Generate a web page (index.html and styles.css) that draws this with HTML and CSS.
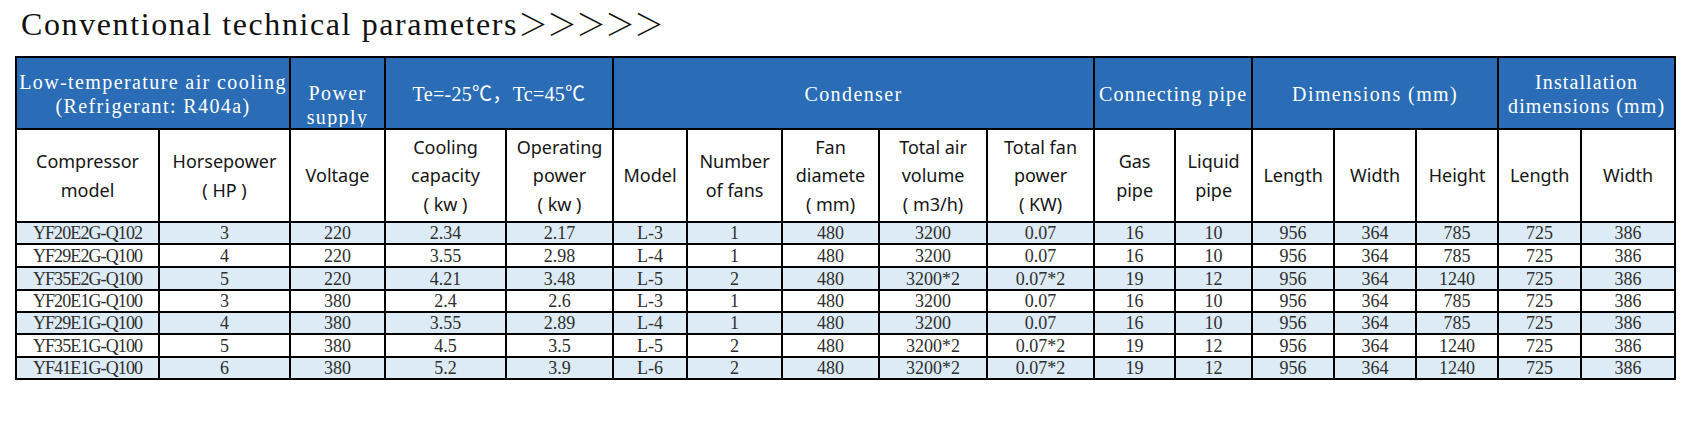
FILE: index.html
```html
<!DOCTYPE html>
<html lang="en">
<head>
<meta charset="utf-8">
<title>Conventional technical parameters</title>
<link rel="stylesheet" href="styles.css">
</head>
<body>
<div class="page">
  <h1 class="title">Conventional technical parameters<span class="arrows">＞＞＞＞＞</span></h1>
  <table class="spec">
    <colgroup>
      <col class="c1"><col class="c2"><col class="c3"><col class="c4"><col class="c5"><col class="c6"><col class="c7"><col class="c8"><col class="c9"><col class="c10"><col class="c11"><col class="c12"><col class="c13"><col class="c14"><col class="c15"><col class="c16"><col class="c17">
    </colgroup>
    <thead>
      <tr class="head1">
        <th colspan="2">Low-temperature air cooling<br>(Refrigerant: R404a)</th>
        <th><div class="clip">Power<br>supply</div></th>
        <th colspan="2" class="temp">Te=-25℃，Tc=45℃</th>
        <th colspan="5">Condenser</th>
        <th colspan="2" class="tight">Connecting pipe</th>
        <th colspan="3">Dimensions (mm)</th>
        <th colspan="2" class="tight">Installation<br>dimensions (mm)</th>
      </tr>
      <tr class="head2">
        <th>Compressor<br>model</th>
        <th>Horsepower<br>( HP )</th>
        <th>Voltage</th>
        <th>Cooling<br>capacity<br>( kw )</th>
        <th>Operating<br>power<br>( kw )</th>
        <th>Model</th>
        <th>Number<br>of fans</th>
        <th>Fan<br>diamete<br>( mm)</th>
        <th>Total air<br>volume<br>( m3/h)</th>
        <th>Total fan<br>power<br>( KW)</th>
        <th>Gas<br>pipe</th>
        <th>Liquid<br>pipe</th>
        <th>Length</th>
        <th>Width</th>
        <th>Height</th>
        <th>Length</th>
        <th>Width</th>
      </tr>
    </thead>
    <tbody>
      <tr class="row alt h22">
        <td class="name">YF20E2G-Q102</td><td>3</td><td>220</td><td>2.34</td><td>2.17</td><td>L-3</td><td>1</td><td>480</td><td>3200</td><td>0.07</td><td>16</td><td>10</td><td>956</td><td>364</td><td>785</td><td>725</td><td>386</td>
      </tr>
      <tr class="row h23">
        <td class="name">YF29E2G-Q100</td><td>4</td><td>220</td><td>3.55</td><td>2.98</td><td>L-4</td><td>1</td><td>480</td><td>3200</td><td>0.07</td><td>16</td><td>10</td><td>956</td><td>364</td><td>785</td><td>725</td><td>386</td>
      </tr>
      <tr class="row alt h23">
        <td class="name">YF35E2G-Q100</td><td>5</td><td>220</td><td>4.21</td><td>3.48</td><td>L-5</td><td>2</td><td>480</td><td>3200*2</td><td>0.07*2</td><td>19</td><td>12</td><td>956</td><td>364</td><td>1240</td><td>725</td><td>386</td>
      </tr>
      <tr class="row h22">
        <td class="name">YF20E1G-Q100</td><td>3</td><td>380</td><td>2.4</td><td>2.6</td><td>L-3</td><td>1</td><td>480</td><td>3200</td><td>0.07</td><td>16</td><td>10</td><td>956</td><td>364</td><td>785</td><td>725</td><td>386</td>
      </tr>
      <tr class="row alt h22">
        <td class="name">YF29E1G-Q100</td><td>4</td><td>380</td><td>3.55</td><td>2.89</td><td>L-4</td><td>1</td><td>480</td><td>3200</td><td>0.07</td><td>16</td><td>10</td><td>956</td><td>364</td><td>785</td><td>725</td><td>386</td>
      </tr>
      <tr class="row h23">
        <td class="name">YF35E1G-Q100</td><td>5</td><td>380</td><td>4.5</td><td>3.5</td><td>L-5</td><td>2</td><td>480</td><td>3200*2</td><td>0.07*2</td><td>19</td><td>12</td><td>956</td><td>364</td><td>1240</td><td>725</td><td>386</td>
      </tr>
      <tr class="row alt h22">
        <td class="name">YF41E1G-Q100</td><td>6</td><td>380</td><td>5.2</td><td>3.9</td><td>L-6</td><td>2</td><td>480</td><td>3200*2</td><td>0.07*2</td><td>19</td><td>12</td><td>956</td><td>364</td><td>1240</td><td>725</td><td>386</td>
      </tr>
    </tbody>
  </table>
</div>
</body>
</html>
```
FILE: styles.css
```css
* { box-sizing: border-box; }

body {
  margin: 0;
  background: #ffffff;
}

.page {
  padding-top: 3px;
}

.title {
  margin: 0 0 0 21px;
  height: 38px;
  font-family: "Liberation Serif", "Noto Sans CJK SC", serif;
  font-weight: normal;
  font-size: 32px;
  line-height: 38px;
  letter-spacing: 1.6px;
  color: #111111;
  white-space: nowrap;
}

.arrows {
  font-family: "Noto Sans CJK SC", sans-serif;
  font-size: 30px;
  letter-spacing: -1px;
  font-weight: 300;
}

.spec {
  margin: 15px 0 0 15px;
  width: 1661px;
  table-layout: fixed;
  border-collapse: separate;
  border-spacing: 0;
  border-top: 2px solid #000000;
  border-left: 2px solid #000000;
}

.c1 { width: 143px; }
.c2 { width: 131px; }
.c3 { width: 95px; }
.c4 { width: 121px; }
.c5 { width: 107px; }
.c6 { width: 74px; }
.c7 { width: 95px; }
.c8 { width: 97px; }
.c9 { width: 108px; }
.c10 { width: 107px; }
.c11 { width: 81px; }
.c12 { width: 77px; }
.c13 { width: 82px; }
.c14 { width: 82px; }
.c15 { width: 82px; }
.c16 { width: 83px; }
.c17 { width: 94px; }

.spec th,
.spec td {
  padding: 0;
  border-right: 2px solid #000000;
  border-bottom: 2px solid #000000;
  text-align: center;
  vertical-align: middle;
  white-space: nowrap;
  overflow: hidden;
  font-weight: normal;
}

.head1 { height: 72px; }

.head1 th {
  padding-top: 2px;
  background: #2a6db6;
  color: #ffffff;
  font-family: "Liberation Serif", "Noto Sans CJK SC", serif;
  font-size: 20px;
  line-height: 24px;
  letter-spacing: 1.4px;
}

.head1 th.tight { letter-spacing: 1.1px; }
.head1 th.temp { letter-spacing: 0.3px; }

.head1 th .clip {
  height: 68px;
  overflow: hidden;
  padding-top: 22px;
}

.head1 th:has(.clip) { padding-top: 0; }

.head2 { height: 93px; }

.head2 th {
  background: #ffffff;
  color: #151515;
  font-family: "Noto Sans", "Open Sans", sans-serif;
  font-size: 18px;
  line-height: 28.5px;
}

.row td {
  background: #ffffff;
  color: #2e2e2e;
  font-family: "Liberation Serif", serif;
  font-size: 18px;
  line-height: 20px;
}

.row.alt td { background: #ddebf7; }

.row td.name { letter-spacing: -0.9px; }

.h22 { height: 22px; }
.h23 { height: 23px; }
```
